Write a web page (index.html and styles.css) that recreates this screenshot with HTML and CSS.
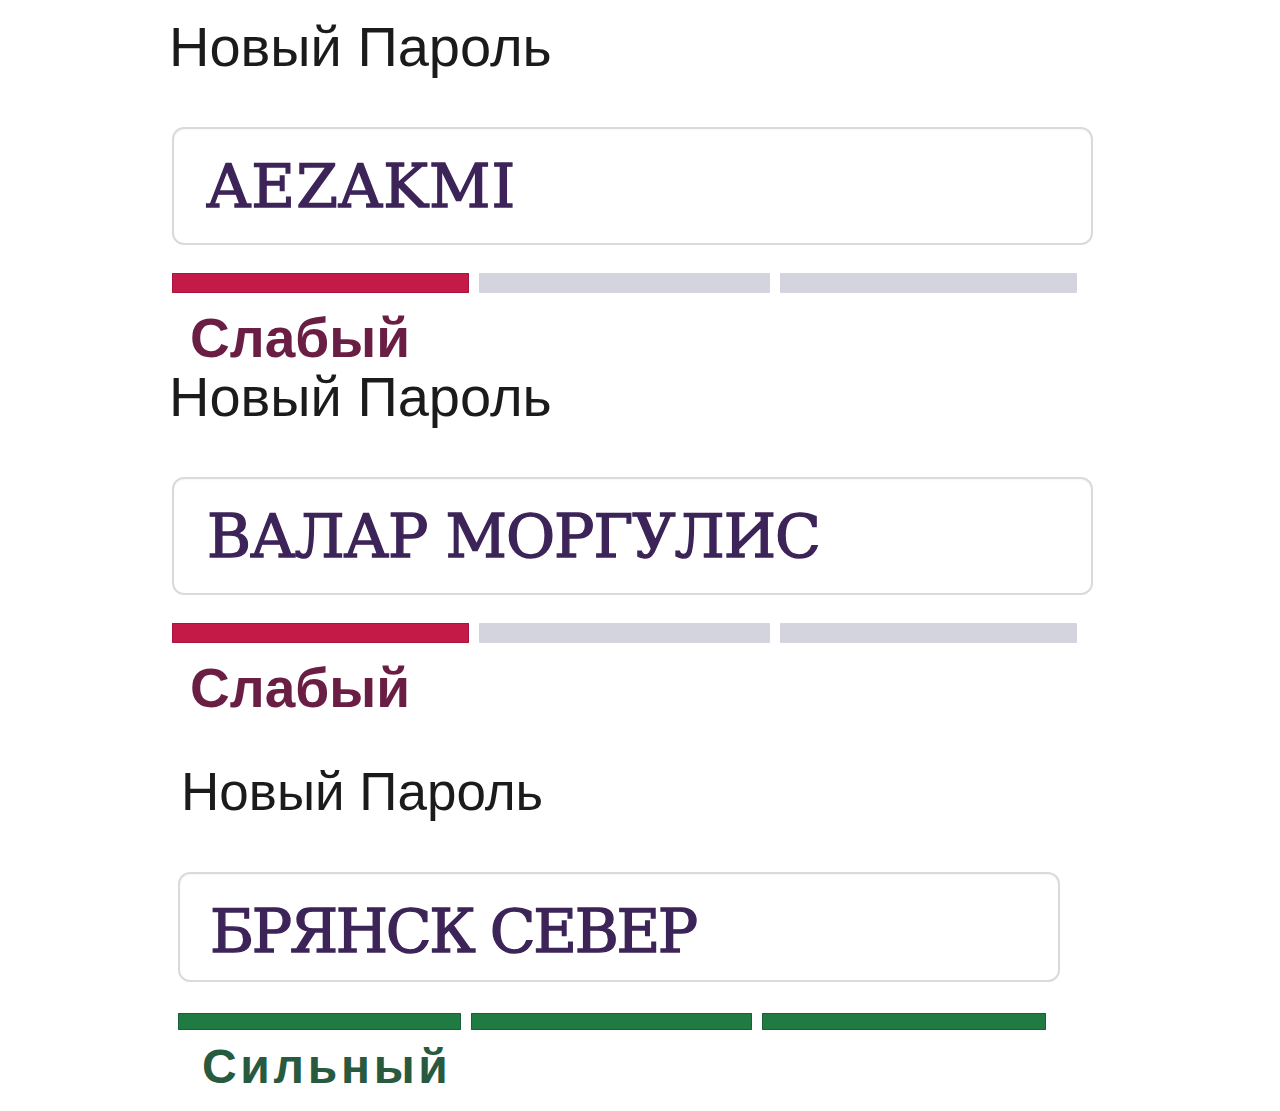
FILE: index.html
```html
<!DOCTYPE html>
<html lang="ru">
<head>
<meta charset="utf-8">
<title>Новый Пароль</title>
<link rel="stylesheet" href="styles.css">
</head>
<body>
<main class="page">
  <section class="field field-one">
    <div class="label">Новый Пароль</div>
    <div class="box"><span class="value value-a">AEZAKMI</span></div>
    <div class="bars weak">
      <span class="seg on"></span><span class="seg"></span><span class="seg"></span>
    </div>
    <div class="strength weak-text">Слабый</div>
  </section>
  <section class="field field-two">
    <div class="label">Новый Пароль</div>
    <div class="box"><span class="value value-b">ВАЛАР МОРГУЛИС</span></div>
    <div class="bars weak">
      <span class="seg on"></span><span class="seg"></span><span class="seg"></span>
    </div>
    <div class="strength weak-text">Слабый</div>
  </section>
  <section class="field field-three">
    <div class="label">Новый Пароль</div>
    <div class="box"><span class="value value-c">БРЯНСК СЕВЕР</span></div>
    <div class="bars strong">
      <span class="seg on"></span><span class="seg on"></span><span class="seg on"></span>
    </div>
    <div class="strength strong-text">Сильный</div>
  </section>
</main>
</body>
</html>
```

FILE: styles.css
```css
html, body {
  margin: 0;
  padding: 0;
  background: #ffffff;
}

.page {
  padding: 17px 0 0 172px;
  font-family: "Liberation Sans", Arial, sans-serif;
}

.field {
  display: flex;
  flex-direction: column;
  align-items: flex-start;
}

.label {
  font-size: 56px;
  line-height: 60px;
  color: #1b1b1b;
  margin-left: -3px;
}

.box {
  box-sizing: border-box;
  width: 921px;
  height: 118px;
  margin-top: 50px;
  border: 2px solid #dadada;
  border-radius: 12px;
  box-shadow: inset 0 1px 2px rgba(0, 0, 0, 0.04);
  display: flex;
  align-items: center;
  padding-left: 33px;
}

.value {
  font-family: "DejaVu Serif", "Liberation Serif", serif;
  font-weight: 400;
  font-size: 60px;
  line-height: 60px;
  color: #3d2458;
  -webkit-text-stroke: 1.4px #3d2458;
  white-space: nowrap;
}

.value-a {
  letter-spacing: 1px;
}

.value-b {
  letter-spacing: -1px;
}

.value-c {
  letter-spacing: -2.4px;
}

.bars {
  display: grid;
  grid-template-columns: 297px 291px 297px;
  column-gap: 10px;
  margin-top: 28px;
  height: 20px;
}

.seg {
  display: block;
  height: 100%;
  background: #d3d4de;
  border-radius: 1px;
}

.weak .seg.on {
  background: #c41a48;
  box-shadow: inset 0 0 0 1px #a8143d;
}

.strong .seg.on {
  background: #1f7b42;
  box-shadow: inset 0 0 0 1px #17603a;
}

.strength {
  font-weight: 700;
  font-size: 55px;
  line-height: 60px;
  margin-top: 15px;
  padding-left: 18px;
}

.weak-text {
  color: #6a1e44;
}

.strong-text {
  color: #275a3e;
}

.field-two {
  margin-top: -1px;
}

.field-three {
  margin-top: 44px;
  margin-left: 6px;
}

.field-three .label {
  font-size: 53px;
  margin-left: 3px;
}

.field-three .box {
  width: 882px;
  height: 110px;
  padding-top: 8px;
  padding-left: 30px;
}

.field-three .bars {
  grid-template-columns: 283px 281px 284px;
  height: 17px;
  margin-top: 31px;
}

.field-three .strength {
  font-size: 48px;
  line-height: 50px;
  letter-spacing: 3.7px;
  margin-top: 12px;
  padding-left: 24px;
}
```
